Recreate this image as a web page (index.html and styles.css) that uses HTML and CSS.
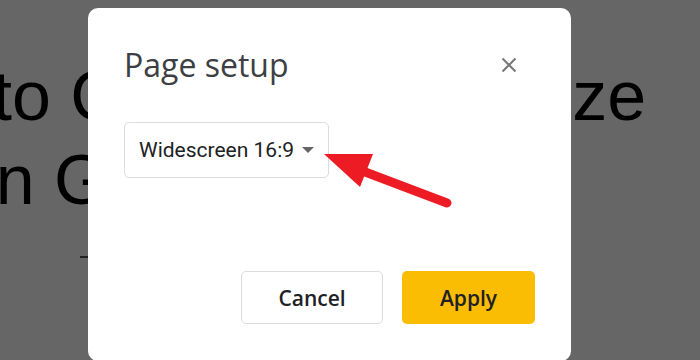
FILE: index.html
```html
<!DOCTYPE html>
<html lang="en">

<head>
    <meta charset="UTF-8">
    <meta name="viewport" content="width=device-width, initial-scale=1.0">
    <title>Page setup</title>
    <link rel="stylesheet" href="styles.css">
</head>

<body>
    <div class="slide">
        <p class="slide-title first">How to Change Slide Size</p>
        <p class="slide-title second">Stin Google Slides</p>
        <div class="slide-rule"></div>
    </div>

    <div class="dialog">
        <div class="dialog-head">
            <h2 class="dialog-title">Page setup</h2>
            <button class="close-btn" aria-label="Close">
                <svg width="16" height="16" viewBox="0 0 16 16">
                    <path d="M1.5 1.5 L14.5 14.5 M14.5 1.5 L1.5 14.5" stroke="#777777" stroke-width="2" fill="none" />
                </svg>
            </button>
        </div>
        <div class="size-select">
            <span class="size-label">Widescreen 16:9</span>
            <span class="caret"></span>
        </div>
        <div class="dialog-actions">
            <button class="btn btn-cancel">Cancel</button>
            <button class="btn btn-apply">Apply</button>
        </div>
    </div>

    <svg class="pointer" width="700" height="360" viewBox="0 0 700 360">
        <line x1="447" y1="203" x2="352" y2="167" stroke="#ed1c24" stroke-width="9" stroke-linecap="round" />
        <polygon points="324,154 373,154 360,187" fill="#ed1c24" />
    </svg>
</body>

</html>
```

FILE: styles.css
```css
* {
    box-sizing: border-box;
}

body {
    margin: 0;
    padding: 0;
    width: 700px;
    height: 360px;
    overflow: hidden;
    background-color: #666666;
    position: relative;
    font-family: Roboto, "Liberation Sans", sans-serif;
}

.slide {
    padding-top: 54px;
}

.slide-title {
    margin: 0;
    font-family: "Liberation Sans", Arial, sans-serif;
    font-size: 70px;
    line-height: 84px;
    color: #000000;
    white-space: nowrap;
}

.slide-title.first {
    margin-left: -167px;
}

.slide-title.second {
    margin-left: -86px;
}

.slide-rule {
    margin: 34px 0 0 80px;
    width: 20px;
    height: 2px;
    background-color: #222222;
}

.dialog {
    position: absolute;
    left: 88px;
    top: 8px;
    width: 483px;
    height: 353px;
    background-color: #ffffff;
    border-radius: 10px;
    padding: 36px 36px 37px 36px;
    display: flex;
    flex-direction: column;
}

.dialog-head {
    display: flex;
    justify-content: space-between;
    align-items: center;
}

.dialog-title {
    margin: 0;
    font-family: "Open Sans", Roboto, sans-serif;
    font-weight: 400;
    font-size: 32px;
    line-height: 42px;
    color: #3c4043;
}

.close-btn {
    border: none;
    background: none;
    padding: 0;
    margin-right: 18px;
    width: 16px;
    height: 16px;
    display: flex;
    cursor: pointer;
}

.size-select {
    margin-top: 36px;
    width: 205px;
    height: 56px;
    border: 1px solid #dadce0;
    border-radius: 5px;
    padding: 0 14px;
    display: flex;
    align-items: center;
    justify-content: space-between;
}

.size-label {
    font-size: 21px;
    color: #202124;
}

.caret {
    width: 0;
    height: 0;
    border-left: 6px solid transparent;
    border-right: 6px solid transparent;
    border-top: 6px solid #666666;
}

.dialog-actions {
    margin-top: auto;
    display: flex;
    justify-content: flex-end;
    gap: 19px;
}

.btn {
    height: 53px;
    border-radius: 5px;
    font-family: "Open Sans", Roboto, sans-serif;
    font-size: 21px;
    font-weight: 600;
    color: #202124;
    cursor: pointer;
}

.btn-cancel {
    width: 142px;
    background-color: #ffffff;
    border: 1px solid #dadce0;
}

.btn-apply {
    width: 133px;
    background-color: #fbbc04;
    border: none;
}

.pointer {
    position: absolute;
    left: 0;
    top: 0;
}
```
